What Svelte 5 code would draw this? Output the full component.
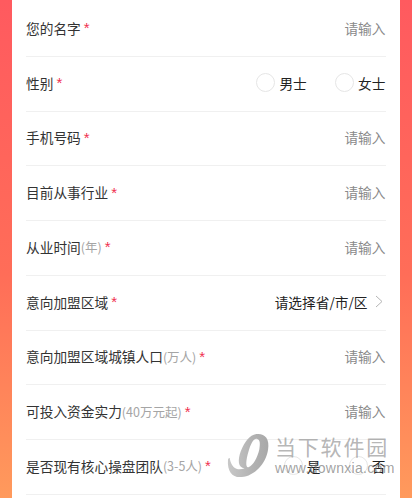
<script>
  const rows = [
    { label: '您的名字', kind: 'input' },
    { label: '性别', kind: 'radio', options: ['男士', '女士'] },
    { label: '手机号码', kind: 'input' },
    { label: '目前从事行业', kind: 'input' },
    { label: '从业时间', hint: '(年)', kind: 'input' },
    { label: '意向加盟区域', kind: 'select' },
    { label: '意向加盟区域城镇人口', hint: '(万人)', kind: 'input' },
    { label: '可投入资金实力', hint: '(40万元起)', kind: 'input' },
    { label: '是否现有核心操盘团队', hint: '(3-5人)', kind: 'radio', options: ['是', '否'] }
  ];
</script>

<div class="page">
  <div class="card">
    {#each rows as row}
      <div class="row">
        <div class="label">
          <span>{row.label}</span>{#if row.hint}<span class="hint">{row.hint}</span>{/if}<span class="star">*</span>
        </div>
        {#if row.kind === 'input'}
          <span class="placeholder">请输入</span>
        {:else if row.kind === 'select'}
          <span class="select">请选择省/市/区
            <svg width="8" height="13" viewBox="0 0 8 13"><path d="M1 1l6 5.5L1 12" fill="none" stroke="#b5b5b5" stroke-width="1"/></svg>
          </span>
        {:else}
          <div class="options">
            {#each row.options as o}
              <span class="option"><i class="radio"></i>{o}</span>
            {/each}
          </div>
        {/if}
      </div>
    {/each}
  </div>

  <div class="watermark">
    <svg class="logo" width="43" height="45" viewBox="0 0 44 46">
      <defs>
        <linearGradient id="wm" x1="0" y1="0" x2="1" y2="0">
          <stop offset="0" stop-color="#c8c8c8"/>
          <stop offset="0.55" stop-color="#b4b4b4"/>
          <stop offset="1" stop-color="#a8a8a8"/>
        </linearGradient>
      </defs>
      <path d="M30 1C38 0 44 5 42 17C40 31 28 44 15 45C6 46 0 40 1 27C2 25 3 25 3 27C5 36 11 39 18 36C11 36 11 27 14 19C18 9 23 2 30 1ZM31 6C27 5 24 12 22 19C19 29 19 36 22 35C27 33 31 25 33 17C34 11 34 7 31 6Z" fill="url(#wm)" fill-rule="evenodd"/>
    </svg>
    <div class="wm-text">
      <span class="wm-cn">当下软件园</span>
      <span class="wm-en">www.downxia.com</span>
    </div>
  </div>
</div>

<style>
  :global(body) { margin: 0; }
  .page {
    position: relative;
    width: 412px;
    height: 498px;
    overflow: hidden;
    box-sizing: border-box;
    padding: 0 12.5px 0 11.5px;
    background: linear-gradient(180deg, #ff5a5f 0%, #ff6d58 55%, #ff9a5c 100%);
    font-family: "Noto Sans CJK SC", "Liberation Sans", sans-serif;
  }
  .card {
    background: #fff;
    height: 498px;
    padding: 2px 14px 0 14.5px;
    overflow: hidden;
  }
  .row {
    height: 54.75px;
    box-sizing: border-box;
    padding-bottom: 2px;
    display: flex;
    align-items: center;
    justify-content: space-between;
    border-bottom: 1px solid #f0f0f0;
    white-space: nowrap;
  }
  .label { font-size: 13.7px; color: #333; display: flex; align-items: center; }
  .hint { color: #a5a5a5; font-size: 12.5px; }
  .star { color: #f0304f; margin-left: 3px; font-size: 15px; font-family: "Liberation Sans", sans-serif; }
  .placeholder { font-size: 13.7px; color: #8a8a8a; }
  .select { font-size: 13.7px; color: #222; display: flex; align-items: center; gap: 7px; padding-right: 3px; }
  .options { display: flex; gap: 28.3px; }
  .option { display: flex; align-items: center; gap: 4px; font-size: 13.7px; color: #222; }
  .radio {
    width: 19px;
    height: 19px;
    box-sizing: border-box;
    border: 1px solid #e6e6e6;
    border-radius: 50%;
    background: #fff;
    display: block;
  }
  .watermark {
    position: absolute;
    left: 227px;
    top: 432.5px;
    display: flex;
    gap: 5px;
    pointer-events: none;
  }
  .logo { flex: none; }
  .wm-text { display: flex; flex-direction: column; gap: 1px; color: rgba(120,120,120,.7); }
  .wm-cn { font-size: 21px; line-height: 27px; letter-spacing: 1.8px; color: rgba(140,140,140,.65); }
  .wm-en { font-size: 14px; line-height: 14px; font-family: "Liberation Sans", sans-serif; letter-spacing: .3px; }
</style>
